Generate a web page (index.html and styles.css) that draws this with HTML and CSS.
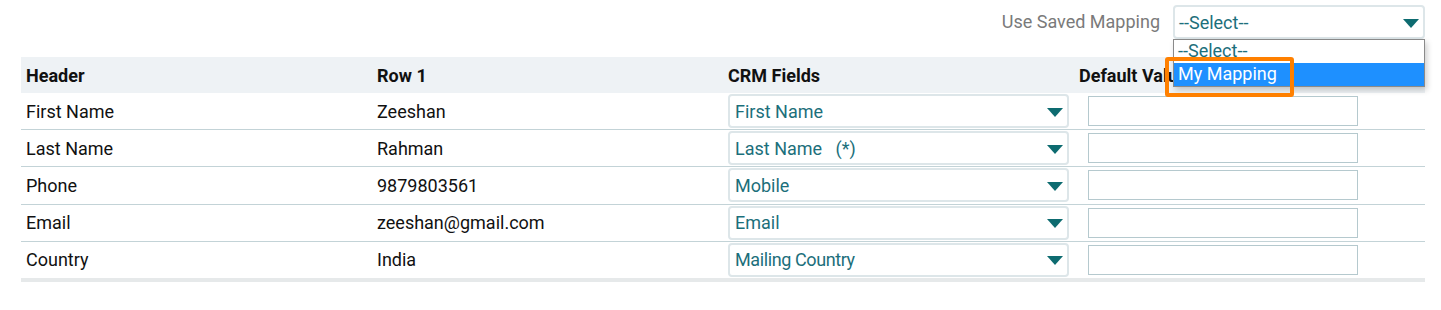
FILE: index.html
```html
<!DOCTYPE html>
<html lang="en">
<head>
    <meta charset="UTF-8">
    <meta name="viewport" content="width=device-width, initial-scale=1.0">
    <title>Import Mapping</title>
    <link rel="stylesheet" href="styles.css">
</head>
<body>
    <div class="mapping-bar">
        <span class="mapping-label">Use Saved Mapping</span>
        <div class="mapping-select">
            <div class="select-box top-select">
                <span>--Select--</span>
                <span class="caret"></span>
            </div>
            <ul class="select-list">
                <li>--Select--</li>
                <li class="active">My Mapping</li>
            </ul>
            <div class="highlight"></div>
        </div>
    </div>

    <table class="map-table">
        <thead>
            <tr>
                <th>Header</th>
                <th>Row 1</th>
                <th>CRM Fields</th>
                <th>Default Value</th>
            </tr>
        </thead>
        <tbody>
            <tr>
                <td>First Name</td>
                <td>Zeeshan</td>
                <td><div class="select-box"><span>First Name</span><span class="caret"></span></div></td>
                <td><input class="default-input" type="text"></td>
            </tr>
            <tr>
                <td>Last Name</td>
                <td>Rahman</td>
                <td><div class="select-box"><span>Last Name&nbsp;&nbsp;&nbsp;(*)</span><span class="caret"></span></div></td>
                <td><input class="default-input" type="text"></td>
            </tr>
            <tr>
                <td>Phone</td>
                <td>9879803561</td>
                <td><div class="select-box"><span>Mobile</span><span class="caret"></span></div></td>
                <td><input class="default-input" type="text"></td>
            </tr>
            <tr>
                <td>Email</td>
                <td>zeeshan@gmail.com</td>
                <td><div class="select-box"><span>Email</span><span class="caret"></span></div></td>
                <td><input class="default-input" type="text"></td>
            </tr>
            <tr>
                <td>Country</td>
                <td>India</td>
                <td><div class="select-box"><span class="narrow">Mailing Country</span><span class="caret"></span></div></td>
                <td><input class="default-input" type="text"></td>
            </tr>
        </tbody>
    </table>
</body>
</html>
```

FILE: styles.css
```css
body {
    font-family: Roboto, "Liberation Sans", sans-serif;
    font-size: 18px;
    margin: 0;
    padding: 0;
    background-color: #fff;
    color: #111;
}
.mapping-bar {
    display: flex;
    justify-content: flex-end;
    align-items: flex-start;
    gap: 13px;
    padding: 5px 16px 0 0;
    height: 57px;
    box-sizing: border-box;
}
.mapping-label {
    color: #7a7a7a;
    line-height: 33px;
}
.mapping-select {
    position: relative;
    width: 252px;
}
.select-box {
    display: flex;
    align-items: center;
    justify-content: space-between;
    box-sizing: border-box;
    height: 34px;
    padding: 0 4px 0 5px;
    border: 2px solid #dde6e9;
    border-radius: 4px;
    background: #fff;
    color: #1c6f7b;
}
.top-select {
    padding-left: 4px;
}
.caret {
    width: 0;
    height: 0;
    border-left: 8px solid transparent;
    border-right: 8px solid transparent;
    border-top: 9px solid #0d6b70;
    margin-right: 0;
    margin-top: 2px;
}
.narrow {
    letter-spacing: -0.4px;
}
.select-list {
    position: absolute;
    top: 34px;
    left: 0;
    width: 252px;
    margin: 0;
    padding: 0;
    list-style: none;
    background: #fff;
    border: 1px solid #8a8a8a;
    box-sizing: border-box;
    box-shadow: 2px 3px 6px rgba(0, 0, 0, 0.2);
    z-index: 2;
}
.select-list li {
    height: 23px;
    line-height: 22px;
    padding-left: 4px;
    color: #1c6f7b;
}
.select-list li.active {
    background-color: #1e90ff;
    color: #fff;
}
.highlight {
    position: absolute;
    top: 52px;
    left: -8px;
    width: 129px;
    height: 40px;
    box-sizing: border-box;
    border: 4px solid #ff8000;
    border-radius: 3px;
    z-index: 3;
}
.map-table {
    width: 1404px;
    margin-left: 21px;
    border-collapse: collapse;
    table-layout: fixed;
    border-bottom: 4px solid #e6e9ea;
}
.map-table th {
    background-color: #eef2f5;
    text-align: left;
    font-weight: bold;
    height: 36px;
    padding: 0 5px;
}
.map-table td {
    height: 36.2px;
    padding: 0 5px;
    border-bottom: 1px solid #c3d3d7;
}
.map-table td:nth-child(3) {
    padding-left: 5px;
}
.map-table td:nth-child(3) .select-box {
    width: 341px;
}
.map-table td:nth-child(4) {
    padding-left: 14px;
}
.default-input {
    display: block;
    width: 270px;
    height: 30px;
    box-sizing: border-box;
    border: 1px solid #b5c9ce;
    margin: 0;
}
```
